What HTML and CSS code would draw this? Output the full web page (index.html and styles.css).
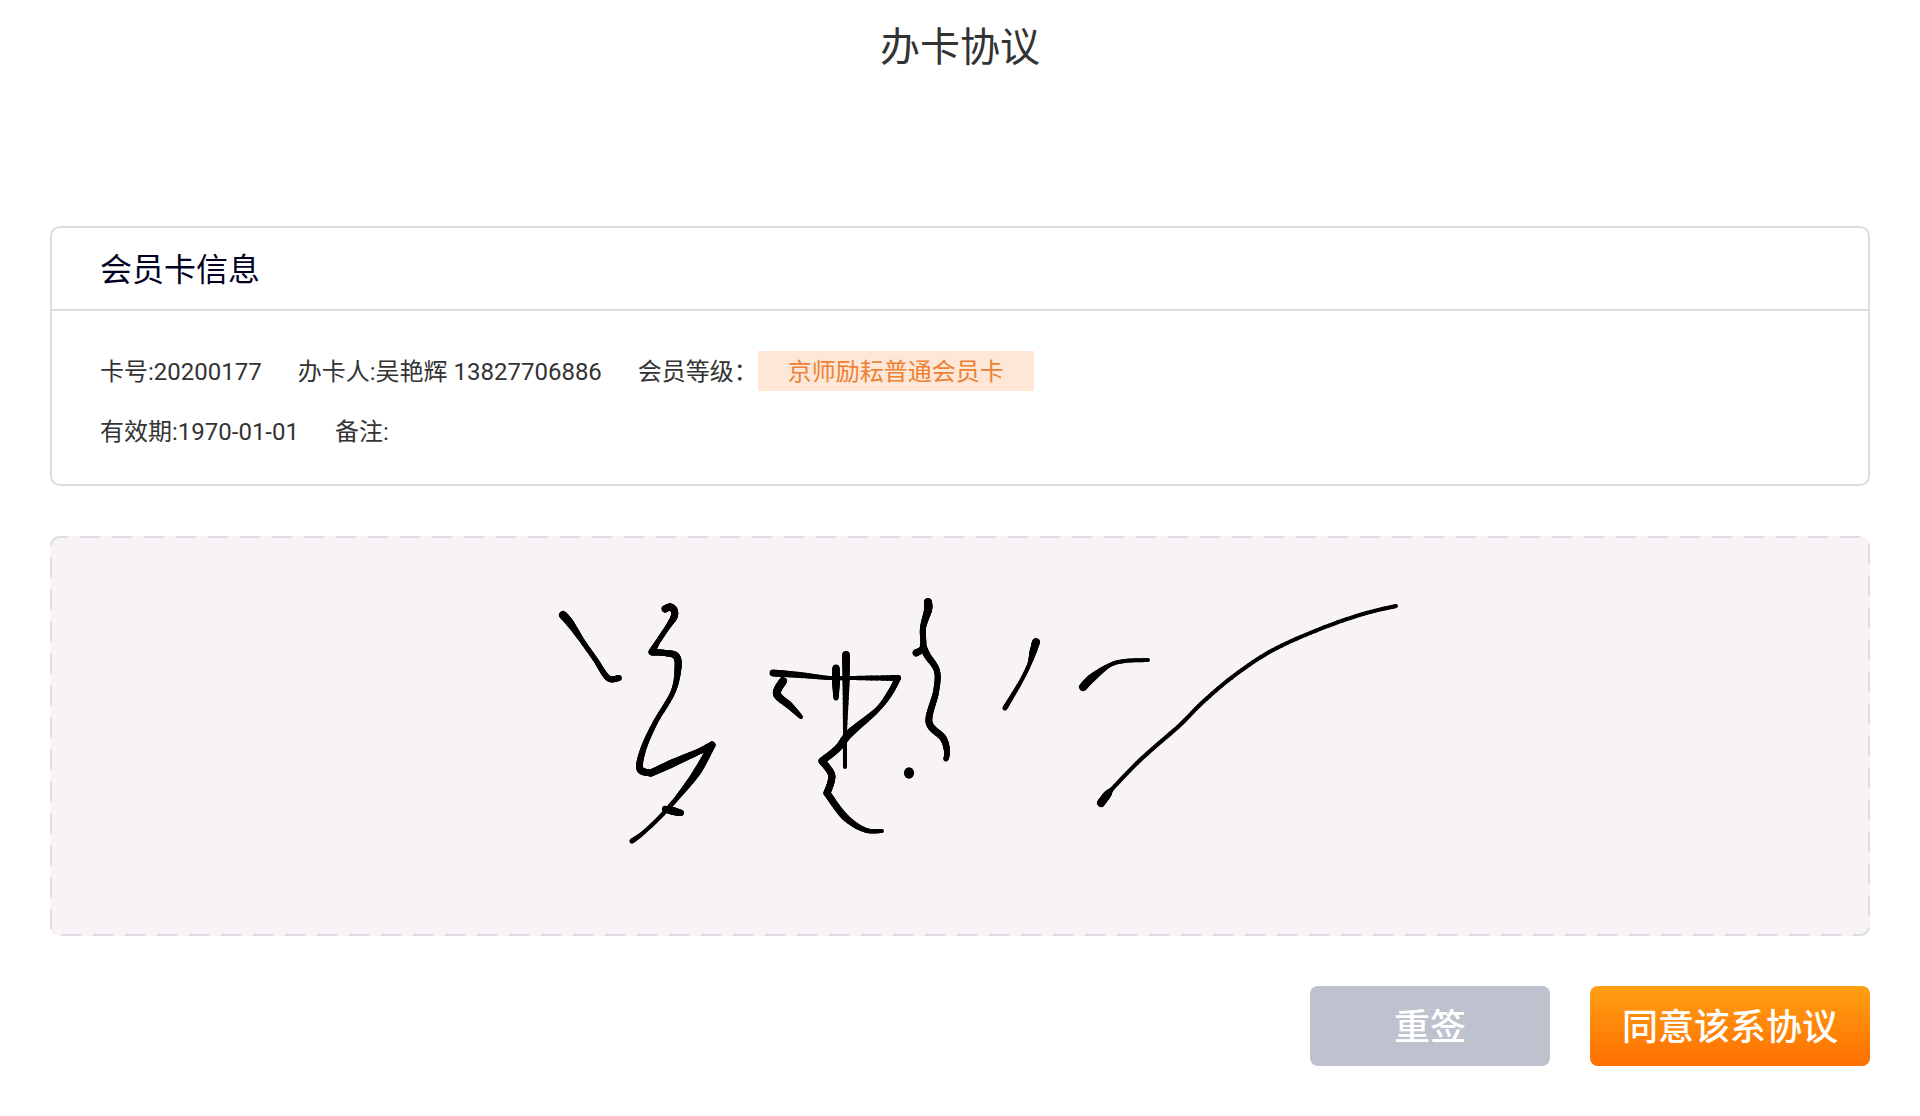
FILE: index.html
```html
<!DOCTYPE html>
<html lang="zh-CN">
<head>
    <meta charset="UTF-8">
    <meta name="viewport" content="width=device-width, initial-scale=1.0">
    <title>办卡协议</title>
    <link rel="stylesheet" href="styles.css">
</head>
<body>
    <header class="page-header">
        <h1>办卡协议</h1>
    </header>

    <main class="container">
        <section class="card">
            <h2 class="card-title">会员卡信息</h2>
            <div class="card-body">
                <div class="row">
                    <span class="field">卡号:20200177</span>
                    <span class="field">办卡人:吴艳辉 13827706886</span>
                    <span class="level"><span class="field">会员等级：</span><span class="field badge">京师励耘普通会员卡</span></span>
                </div>
                <div class="row">
                    <span class="field">有效期:1970-01-01</span>
                    <span class="field">备注:</span>
                </div>
            </div>
        </section>

        <section class="sign-pad">
            <svg class="pad-border"><rect class="pad-line" rx="8"/></svg>
            <svg class="signature" id="signature" viewBox="500 576 920 320" role="img" aria-label="签名"></svg>
        </section>

        <div class="actions">
            <button type="button" class="btn btn-reset" id="resetButton">重签</button>
            <button type="button" class="btn btn-agree">同意该系协议</button>
        </div>
    </main>

    <script src="script.js"></script>
</body>
</html>
```

FILE: styles.css
```css
* {
    box-sizing: border-box;
}
body {
    margin: 0;
    background-color: #fff;
    color: #333;
    font-family: Roboto, "Noto Sans CJK SC", sans-serif;
    font-size: 24px;
}
h1, h2 {
    margin: 0;
    font-weight: 400;
}
.page-header {
    padding: 18px 50px 14px;
    text-align: center;
}
.page-header h1 {
    font-size: 40px;
    line-height: 60px;
}
.container {
    padding: 134px 50px 50px;
}
.card {
    border: 2px solid #ddd;
    border-radius: 10px;
}
.card-title {
    padding: 22px 48px 18px;
    border-bottom: 2px solid #ddd;
    color: #00001f;
    font-size: 32px;
    line-height: 41px;
}
.card-body {
    display: flex;
    flex-direction: column;
    gap: 20px;
    padding: 40px 48px 33px;
}
.row {
    display: flex;
    flex-wrap: wrap;
    gap: 36px;
}
.field {
    padding-top: 2px;
    line-height: 38px;
}
.level {
    display: flex;
}
.badge {
    padding-left: 30px;
    padding-right: 30px;
    background-color: #fee7d7;
    color: #ed8136;
}
.sign-pad {
    position: relative;
    display: flex;
    justify-content: center;
    align-items: center;
    min-height: 400px;
    margin-top: 50px;
    border-radius: 10px;
    background-color: #f7f3f7;
}
/* 虚线边框：线段 20px，间隔 12px */
.pad-border {
    position: absolute;
    top: 0;
    left: 0;
    width: 100%;
    height: 100%;
}
.pad-line {
    x: 1px;
    y: 1px;
    width: calc(100% - 2px);
    height: calc(100% - 2px);
    fill: none;
    stroke: #dddce0;
    stroke-width: 2;
    stroke-dasharray: 20 12;
    stroke-dashoffset: 11;
}
.signature {
    position: relative;
    width: 920px;
    max-width: 100%;
    height: 320px;
    stroke: #000;
    stroke-linecap: round;
}
.actions {
    display: flex;
    justify-content: flex-end;
    gap: 40px;
    margin-top: 50px;
}
.btn {
    height: 80px;
    padding: 4px 0 0;
    border: none;
    border-radius: 8px;
    color: #fff;
    font-family: inherit;
    font-size: 36px;
    font-weight: 500;
    line-height: 76px;
    cursor: pointer;
}
.btn-reset {
    width: 240px;
    background-color: #bec2cf;
}
.btn-agree {
    width: 280px;
    background-image: linear-gradient(#ff9f14, #ff6f00);
}
```

FILE: script.js
```js
// 每个点：[x, y, 笔宽]
const strokes = [
    [[563,615,8],[570,623,8],[583,642,5],[595,659,5],[608,678,6],[619,678,6]],
    [[665,609,7],[670,607,7],[674,610,7],[674,617,7],[667,628,5],[657,643,5],[652,652,7]],
    [[652,652,7],[665,653,6],[676,656,7],[678,668,7],[673,692,5],[655,723,5],[643,750,6],[640,769,7],[651,773,7]],
    [[651,773,7],[673,763,8],[700,751,6],[712,745,7]],
    [[712,745,7],[697,772,8],[677,798,5],[660,817,4],[643,833,4],[632,841,5]],
    [[665,809,6],[673,811,8],[681,813,6]],
    [[773,673,7],[800,675,6],[830,678,4],[853,678,4],[898,678,6]],
    [[898,678,6],[890,693,6],[877,710,5],[850,733,8],[838,748,7],[822,761,7]],
    [[822,761,7],[831,773,7],[831,782,7],[827,793,7]],
    [[827,793,7],[845,817,7],[865,830,5],[882,831,4]],
    [[783,681,8],[777,694,8],[790,706,7],[801,717,4]],
    [[836,668,7],[836,682,8],[836,698,5]],
    [[846,655,8],[846,685,7],[845,733,4],[845,767,4]],
    [[928,602,8],[928,610,8],[923,628,6],[923,647,6],[916,653,7]],
    [[923,645,6],[927,655,7],[937,671,6],[936,692,6],[929,722,7],[943,738,7],[947,751,6],[946,759,5]],
    [[909,772,9],[909,774,9]],
    [[1036,642,8],[1033,652,7],[1029,665,4],[1020,683,4],[1005,708,5]],
    [[1083,687,8],[1093,677,8],[1110,665,4],[1125,661,4],[1148,660,4]],
    [[1101,803,8],[1107,795,8],[1113,788,4],[1137,763,4],[1157,745,4],[1180,725,4],[1204,701,4],[1235,675,4],[1273,650,4],[1320,629,4],[1363,614,4],[1396,606,4]]
];

const signature = document.getElementById('signature');

function spline(a, b, c, d, t) {
    return 0.5 * (2 * b + (c - a) * t + (2 * a - 5 * b + 4 * c - d) * t * t + (3 * b - a - 3 * c + d) * t * t * t);
}

function drawLine(from, to) {
    const line = document.createElementNS('http://www.w3.org/2000/svg', 'line');
    line.setAttribute('x1', from[0]);
    line.setAttribute('y1', from[1]);
    line.setAttribute('x2', to[0]);
    line.setAttribute('y2', to[1]);
    line.setAttribute('stroke-width', to[2]);
    signature.appendChild(line);
}

strokes.forEach(points => {
    for (let i = 0; i < points.length - 1; i++) {
        const p0 = points[i - 1] || points[i];
        const p1 = points[i];
        const p2 = points[i + 1];
        const p3 = points[i + 2] || p2;
        let last = p1;
        for (let s = 1; s <= 10; s++) {
            const t = s / 10;
            const next = [
                spline(p0[0], p1[0], p2[0], p3[0], t),
                spline(p0[1], p1[1], p2[1], p3[1], t),
                p1[2] + (p2[2] - p1[2]) * t
            ];
            drawLine(last, next);
            last = next;
        }
    }
});

document.getElementById('resetButton').addEventListener('click', () => {
    signature.innerHTML = '';
});
```
